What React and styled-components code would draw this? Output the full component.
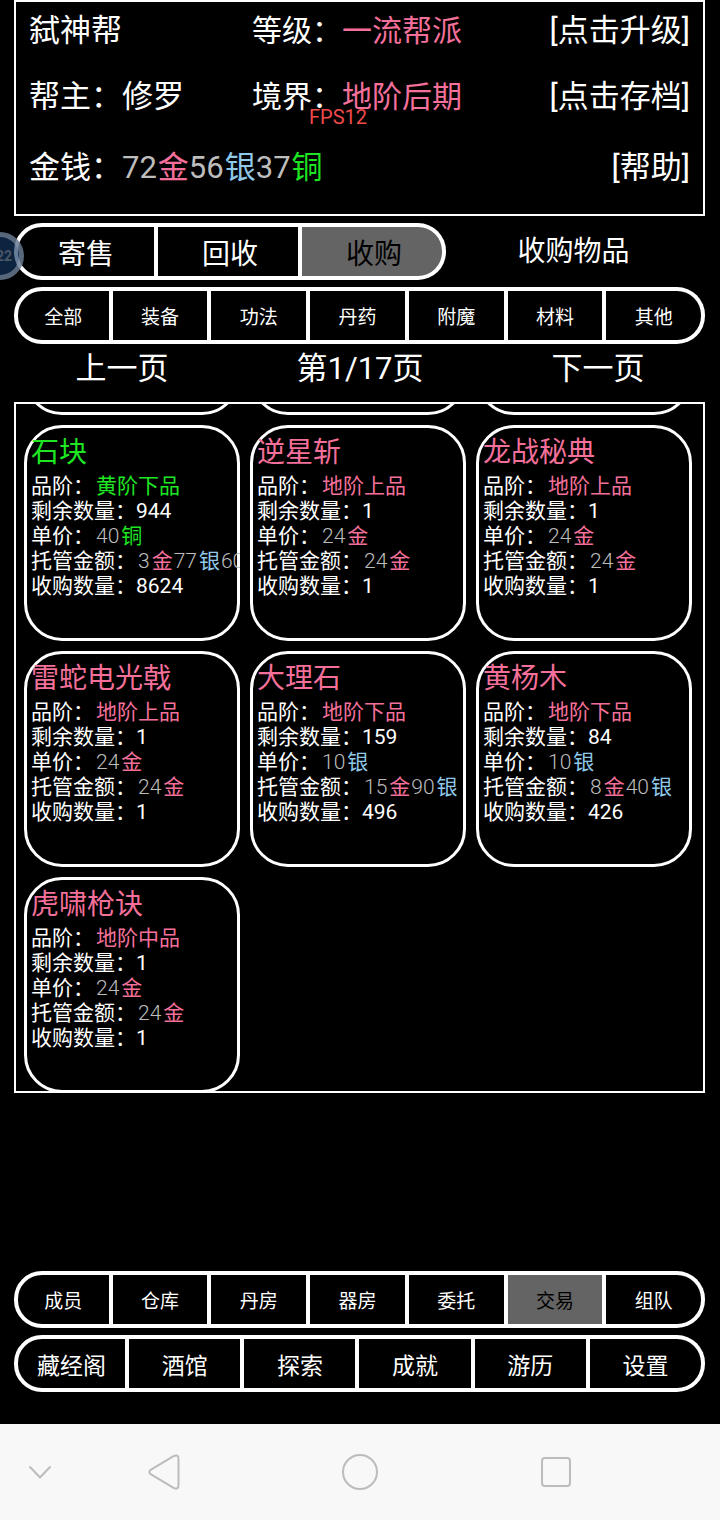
import React, { useState } from "react";
import styled, { createGlobalStyle } from "styled-components";

const colors = {
  white: "#ffffff",
  num: "#bdbdbd",
  gold: "#f4709a",
  silver: "#8fc8e8",
  copper: "#1ee622",
};

const GlobalStyle = createGlobalStyle`
  * {
    box-sizing: border-box;
  }
  body {
    margin: 0;
    background-color: #000;
    color: #fff;
    font-family: Roboto, "Noto Sans CJK SC", sans-serif;
  }
  button {
    font-family: inherit;
    color: inherit;
    background: none;
    border: 0;
    padding: 0;
    margin: 0;
    cursor: pointer;
  }
`;

const Page = styled.div`
  position: relative;
  display: flex;
  flex-direction: column;
  min-height: 100vh;
`;

const Main = styled.main`
  flex: 1;
  display: flex;
  flex-direction: column;
  padding: 0 15px 32px 14px;
`;

const Header = styled.header`
  display: grid;
  grid-template-columns: 1fr 1fr 1fr;
  grid-template-rows: 58px 73px 70px;
  column-gap: 8px;
  align-items: center;
  border: 2px solid #fff;
  padding: 0 13px 11px;
  font-size: 31px;
  line-height: 40px;
  white-space: nowrap;
`;

const Rank = styled.div`
  font-size: 30px;
`;

const Money = styled.div`
  grid-column: span 2;
`;

const Tone = styled.span`
  color: ${(props) => colors[props.tone]};
`;

const Amount = styled.span`
  color: ${colors.num};
`;

const Unit = styled(Tone)`
  margin-left: 1px;
`;

const HeaderButton = styled.button`
  justify-self: end;
  font-size: 31px;
  line-height: 40px;
`;

const Toolbar = styled.div`
  display: flex;
  align-items: center;
  margin: 7px 0;
`;

const Bar = styled.nav`
  display: grid;
  grid-auto-flow: column;
  grid-auto-columns: minmax(0, 1fr);
  flex: ${(props) => (props.$part ? "0 0 62.5%" : "0 0 auto")};
`;

const BarButton = styled.button`
  height: 57px;
  border: solid #fff;
  border-width: 4px 4px 4px 0;
  padding-left: ${(props) => (props.$part ? 4 : 0)}px;
  font-size: ${(props) => props.$size}px;
  color: ${(props) => (props.$active ? "#000" : "#fff")};
  background-color: ${(props) => (props.$active ? "#646464" : "#000")};

  &:first-child {
    border-left-width: 4px;
    padding-left: 0;
    border-radius: 28px 0 0 28px;
  }
  &:last-child {
    border-radius: 0 28px 28px 0;
  }
`;

const ToolbarTitle = styled.h1`
  flex: 1;
  margin: 0;
  padding-right: 4px;
  text-align: center;
  font-size: 28px;
  font-weight: 400;
  line-height: 40px;
`;

const Pager = styled.div`
  display: grid;
  grid-template-columns: 1fr 1fr 1fr;
  margin: 0 -12px 8px -11px;
  font-size: 31px;
  line-height: 50px;
  text-align: center;
`;

const PagerButton = styled.button`
  font-size: 31px;
  line-height: 50px;
`;

const List = styled.section`
  display: flex;
  flex-direction: column;
  justify-content: flex-end;
  height: 691px;
  border: 2px solid #fff;
  overflow: hidden;
`;

const Cards = styled.div`
  display: grid;
  grid-template-columns: repeat(3, minmax(0, 1fr));
  gap: 10px;
  padding: 0 11px 0 8px;
  margin-bottom: -2px;
`;

const Card = styled.article`
  height: 216px;
  border: 3px solid #fff;
  border-radius: 38px;
`;

const CardBody = styled.div`
  margin: -3px;
  padding: 12px 0 0 7px;
  overflow: hidden;
  white-space: nowrap;
  font-size: 21px;
  line-height: 25px;
`;

const CardTitle = styled.h2`
  margin: 0 0 5px;
  font-size: 28px;
  font-weight: 400;
  line-height: 32px;
  color: ${(props) => colors[props.tone]};
`;

const Value = styled.span`
  margin-left: 2px;
  color: ${(props) => colors[props.tone]};

  ${Amount} {
    font-weight: 300;
  }
  ${Unit} {
    margin: 0 1px 0 2px;
  }
`;

const Footer = styled.div`
  display: flex;
  flex-direction: column;
  gap: 7px;
  margin-top: auto;
`;

const Fps = styled.div`
  position: absolute;
  top: 105px;
  left: 309px;
  font-size: 20px;
  line-height: 24px;
  color: #f04a4a;
`;

const Bubble = styled.div`
  position: absolute;
  top: 232px;
  left: -24px;
  width: 48px;
  height: 48px;
  border: 5px solid rgba(150, 160, 175, 0.55);
  border-radius: 50%;
  background-color: rgba(20, 55, 100, 0.65);
  color: #4a5666;
  padding-right: 7px;
  text-align: right;
  font-size: 14px;
  font-weight: 700;
  line-height: 38px;
`;

const SystemBar = styled.nav`
  display: grid;
  grid-template-columns: 66px 1fr 1fr 1fr 66px;
  height: 96px;
  background-color: #f8f8f8;
`;

const SystemButton = styled.button`
  display: flex;
  align-items: center;
  justify-content: center;

  &:first-child {
    padding-left: 14px;
  }
`;

const Icon = styled.svg`
  width: 40px;
  height: 40px;
  flex: none;
  fill: none;
  stroke: #bcbcbc;
  stroke-width: 2;
  stroke-linecap: round;
  stroke-linejoin: round;
`;

const modes = ["寄售", "回收", "收购"];
const categories = ["全部", "装备", "功法", "丹药", "附魔", "材料", "其他"];
const rooms = ["成员", "仓库", "丹房", "器房", "委托", "交易", "组队"];
const menus = ["藏经阁", "酒馆", "探索", "成就", "游历", "设置"];

const units = { gold: "金", silver: "银", copper: "铜" };

const items = [
  { name: "石块", tone: "copper", grade: "黄阶下品", left: 944, price: { copper: 40 }, held: { gold: 3, silver: 77, copper: 60 }, count: 8624 },
  { name: "逆星斩", tone: "gold", grade: "地阶上品", left: 1, price: { gold: 24 }, held: { gold: 24 }, count: 1 },
  { name: "龙战秘典", tone: "gold", grade: "地阶上品", left: 1, price: { gold: 24 }, held: { gold: 24 }, count: 1 },
  { name: "雷蛇电光戟", tone: "gold", grade: "地阶上品", left: 1, price: { gold: 24 }, held: { gold: 24 }, count: 1 },
  { name: "大理石", tone: "gold", grade: "地阶下品", left: 159, price: { silver: 10 }, held: { gold: 15, silver: 90 }, count: 496 },
  { name: "黄杨木", tone: "gold", grade: "地阶下品", left: 84, price: { silver: 10 }, held: { gold: 8, silver: 40 }, count: 426 },
  { name: "虎啸枪诀", tone: "gold", grade: "地阶中品", left: 1, price: { gold: 24 }, held: { gold: 24 }, count: 1 },
];

const Coins = ({ amount }) =>
  Object.keys(amount).map((unit) => (
    <React.Fragment key={unit}>
      <Amount>{amount[unit]}</Amount>
      <Unit tone={unit}>{units[unit]}</Unit>
    </React.Fragment>
  ));

const ButtonBar = ({ labels, size, active, onSelect, part }) => (
  <Bar $part={part}>
    {labels.map((label) => (
      <BarButton
        key={label}
        $size={size}
        $part={part}
        $active={label === active}
        onClick={() => onSelect && onSelect(label)}
      >
        {label}
      </BarButton>
    ))}
  </Bar>
);

const ItemCard = ({ item }) => (
  <Card>
    <CardBody>
      <CardTitle tone={item.tone}>{item.name}</CardTitle>
      <div>
        品阶：<Value tone={item.tone}>{item.grade}</Value>
      </div>
      <div>剩余数量：{item.left}</div>
      <div>
        单价：<Value><Coins amount={item.price} /></Value>
      </div>
      <div>
        托管金额：<Value><Coins amount={item.held} /></Value>
      </div>
      <div>收购数量：{item.count}</div>
    </CardBody>
  </Card>
);

const App = () => {
  const [mode, setMode] = useState("收购");
  const [room, setRoom] = useState("交易");

  return (
    <Page>
      <GlobalStyle />
      <Main>
        <Header>
          <div>弑神帮</div>
          <Rank>
            等级：<Tone tone="gold">一流帮派</Tone>
          </Rank>
          <HeaderButton>[点击升级]</HeaderButton>
          <div>帮主：修罗</div>
          <Rank>
            境界：<Tone tone="gold">地阶后期</Tone>
          </Rank>
          <HeaderButton>[点击存档]</HeaderButton>
          <Money>
            金钱：<Coins amount={{ gold: 72, silver: 56, copper: 37 }} />
          </Money>
          <HeaderButton>[帮助]</HeaderButton>
        </Header>

        <Toolbar>
          <ButtonBar part labels={modes} size={28} active={mode} onSelect={setMode} />
          <ToolbarTitle>收购物品</ToolbarTitle>
        </Toolbar>
        <ButtonBar labels={categories} size={19} />

        <Pager>
          <PagerButton>上一页</PagerButton>
          <span>第1/17页</span>
          <PagerButton>下一页</PagerButton>
        </Pager>

        <List>
          <Cards>
            {/* empty slots of the row scrolled out above */}
            <Card />
            <Card />
            <Card />
            {items.map((item) => (
              <ItemCard key={item.name} item={item} />
            ))}
          </Cards>
        </List>

        <Footer>
          <ButtonBar labels={rooms} size={19} active={room} onSelect={setRoom} />
          <ButtonBar labels={menus} size={23} />
        </Footer>
      </Main>

      <SystemBar>
        <SystemButton aria-label="收起">
          <Icon viewBox="0 0 40 40">
            <path d="M10 15 L20 25.5 L30 15" />
          </Icon>
        </SystemButton>
        <SystemButton aria-label="返回">
          <Icon viewBox="0 0 40 40">
            <path d="M7 17.6 L29.5 4.2 Q34.5 1.8 34.5 7 V33 Q34.5 38.2 29.5 35.8 L7 22.4 Q3.6 20 7 17.6 Z" />
          </Icon>
        </SystemButton>
        <SystemButton aria-label="主页">
          <Icon viewBox="0 0 40 40">
            <circle cx="20" cy="20" r="17" />
          </Icon>
        </SystemButton>
        <SystemButton aria-label="最近任务">
          <Icon viewBox="0 0 40 40">
            <rect x="6" y="6" width="28" height="28" rx="3" />
          </Icon>
        </SystemButton>
      </SystemBar>

      <Fps>FPS12</Fps>
      <Bubble>22</Bubble>
    </Page>
  );
};

export default App;
